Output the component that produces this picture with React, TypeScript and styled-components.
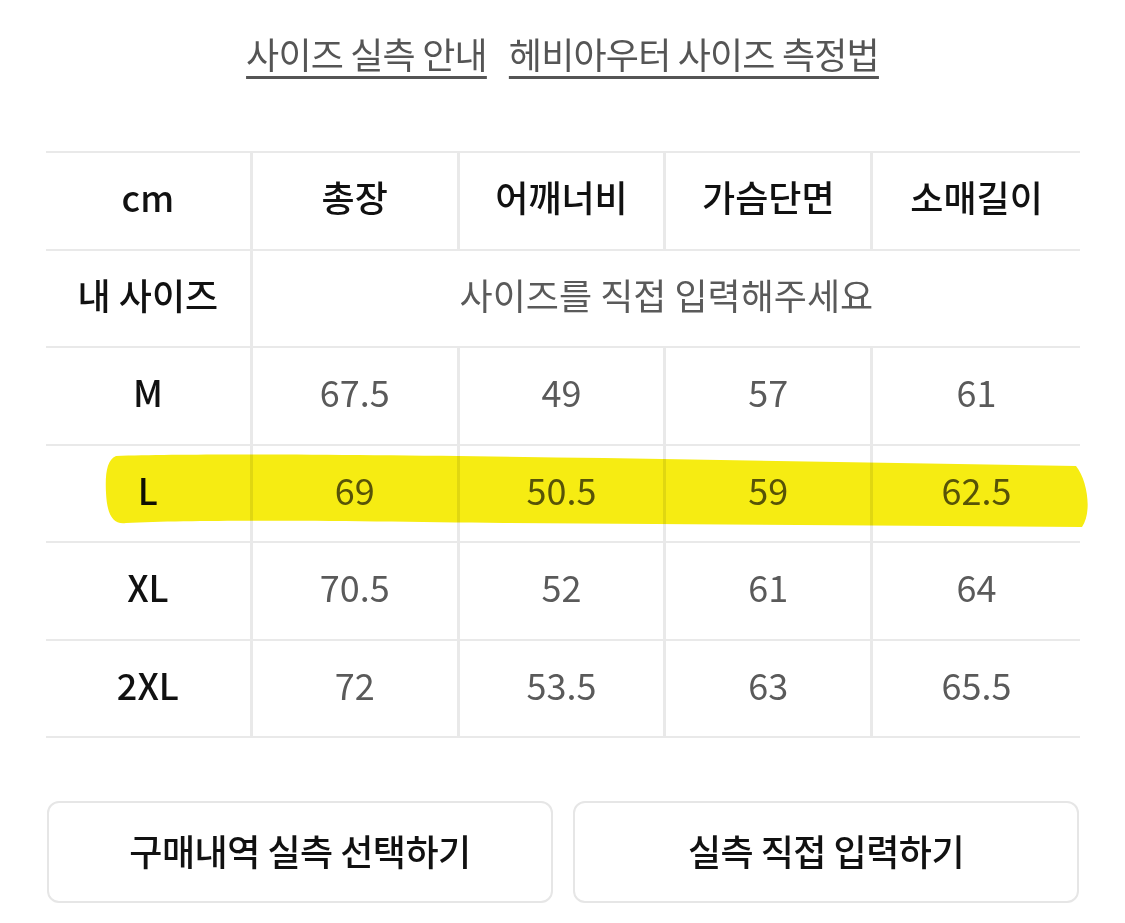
import React from "react";
import styled, { createGlobalStyle } from "styled-components";

const GlobalStyle = createGlobalStyle`
  body {
    margin: 0;
    background: #ffffff;
    font-family: "Noto Sans CJK KR", "Noto Sans", sans-serif;
  }
`;

const Page = styled.div`
  width: 1125px;
  height: 923px;
  position: relative;
  overflow: hidden;
  background: #fff;
`;

const Links = styled.div`
  display: flex;
  justify-content: center;
  gap: 22px;
  padding-top: 30px;
  height: 151px;
  box-sizing: border-box;
`;

const GuideLink = styled.a`
  font-size: 36px;
  line-height: 46px;
  color: #555;
  text-decoration: underline;
  text-decoration-thickness: 3px;
  text-underline-offset: 7px;
  letter-spacing: -0.8px;
`;

const Table = styled.div`
  position: relative;
  margin-left: 46px;
  width: 1034px;
  display: grid;
  grid-template-columns: repeat(5, 1fr);
  border-top: 2px solid #e9e9e9;
`;

const Cell = styled.div<{ $head?: boolean; $span?: number; $last?: boolean }>`
  grid-column: span ${(p) => p.$span ?? 1};
  height: 97.5px;
  box-sizing: border-box;
  padding-bottom: 9px;
  display: flex;
  align-items: center;
  justify-content: center;
  border-bottom: 2px solid #e9e9e9;
  border-right: ${(p) => (p.$last ? "none" : "3px solid #e9e9e9")};
  font-size: 36px;
  font-weight: ${(p) => (p.$head ? 500 : 400)};
  color: ${(p) => (p.$head ? "#111" : "#5a5a5a")};
`;

const Highlight = styled.svg`
  position: absolute;
  left: 58px;
  top: 300px;
  width: 990px;
  height: 80px;
  mix-blend-mode: multiply;
  pointer-events: none;
`;

const Buttons = styled.div`
  display: flex;
  gap: 20px;
  margin: 63px 0 0 47px;
  width: 1032px;
`;

const Button = styled.button`
  flex: 1;
  height: 102px;
  padding-bottom: 6px;
  border: 2px solid #e6e6e6;
  border-radius: 12px;
  background: #fff;
  font-family: inherit;
  font-size: 36px;
  font-weight: 500;
  color: #111;
  letter-spacing: -0.5px;
`;

const headers = ["cm", "총장", "어깨너비", "가슴단면", "소매길이"];

const rows: string[][] = [
  ["M", "67.5", "49", "57", "61"],
  ["L", "69", "50.5", "59", "62.5"],
  ["XL", "70.5", "52", "61", "64"],
  ["2XL", "72", "53.5", "63", "65.5"],
];

export default function App() {
  return (
    <Page>
      <GlobalStyle />
      <Links>
        <GuideLink>사이즈 실측 안내</GuideLink>
        <GuideLink>헤비아우터 사이즈 측정법</GuideLink>
      </Links>
      <Table>
        {headers.map((h, i) => (
          <Cell key={h} $head $last={i === 4}>
            {h}
          </Cell>
        ))}
        <Cell $head>내 사이즈</Cell>
        <Cell $span={4} $last>
          사이즈를 직접 입력해주세요
        </Cell>
        {rows.map((r) =>
          r.map((v, i) => (
            <Cell key={r[0] + i} $head={i === 0} $last={i === 4}>
              {v}
            </Cell>
          ))
        )}
        <Highlight viewBox="0 0 990 80" preserveAspectRatio="none">
          <path
            d="M12 3 C 100 0, 300 2, 500 5 L 972 13 C 984 28, 988 60, 978 74 L 400 70 C 250 68, 100 66, 22 70 C 8 72, 3 60, 2 40 C 1 20, 3 7, 12 3 Z"
            fill="#f6ec12"
          />
        </Highlight>
      </Table>
      <Buttons>
        <Button>구매내역 실측 선택하기</Button>
        <Button>실측 직접 입력하기</Button>
      </Buttons>
    </Page>
  );
}
